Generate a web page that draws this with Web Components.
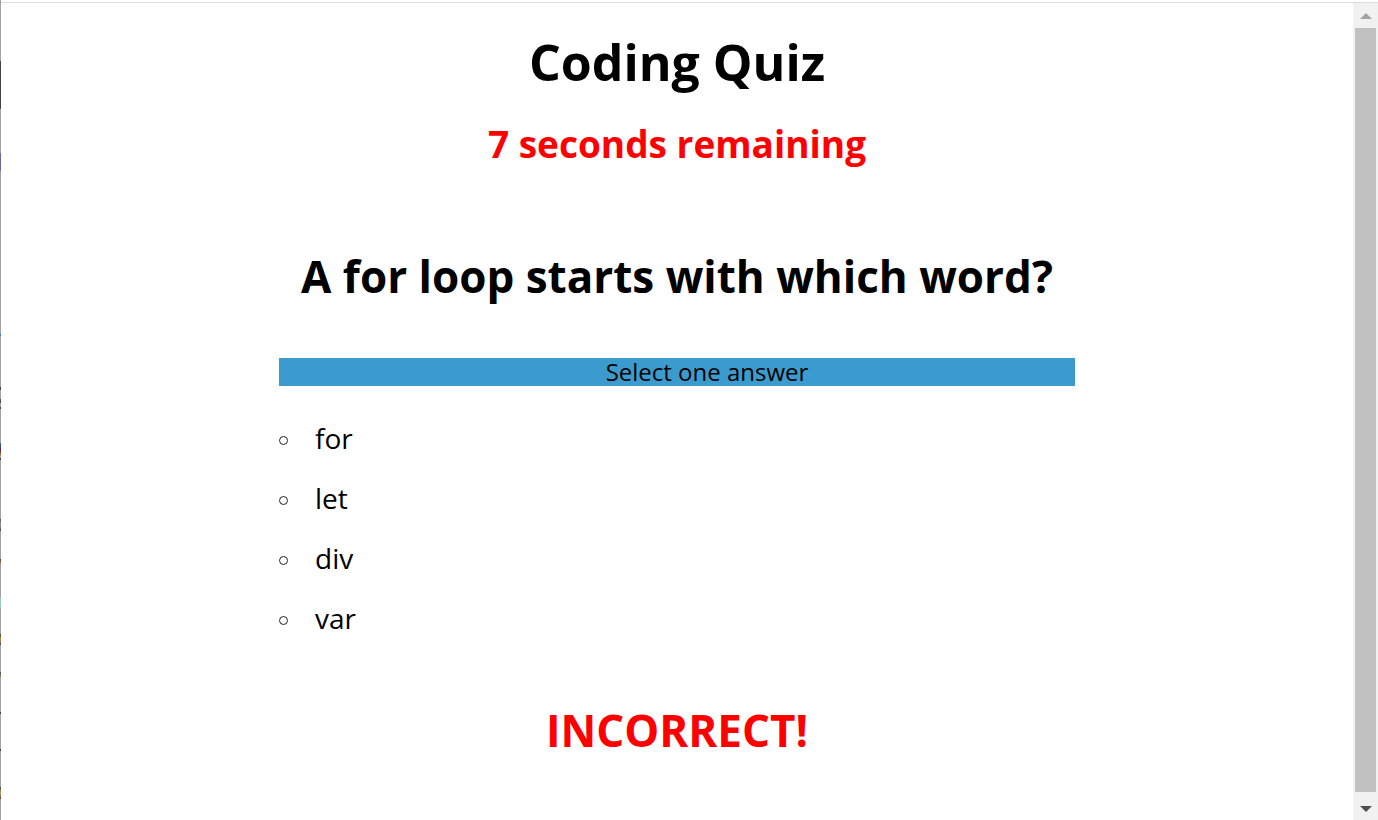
<!DOCTYPE html>
<html lang="en">
<head>
<meta charset="utf-8">
<title>Coding Quiz</title>
<style>
html, body { margin: 0; height: 100%; }
body { background: #fff; color: #000; font-family: "Open Sans", "Noto Sans", sans-serif; }
</style>
</head>
<body>
<quiz-window>
  <quiz-card>
    <span slot="title">Coding Quiz</span>
    <span slot="timer">7 seconds remaining</span>
    <span slot="question">A for loop starts with which word?</span>
    <answer-list slot="answers" prompt="Select one answer" options="for,let,div,var"></answer-list>
    <span slot="result">INCORRECT!</span>
  </quiz-card>
</quiz-window>
<script>
function attach(host, html) {
  const t = document.createElement('template');
  t.innerHTML = html;
  const root = host.attachShadow({ mode: 'open' });
  root.append(t.content.cloneNode(true));
  return root;
}

customElements.define('scroll-rail', class extends HTMLElement {
  constructor() {
    super();
    attach(this, `
      <style>
        :host { display: flex; flex-direction: column; background: #f1f1f1; width: 25px; }
        button { border: 0; padding: 0; height: 25px; background: none; display: grid; place-items: center; color: #a3a3a3; }
        button.down { height: 28px; padding-top: 6px; color: #505050; }
        svg { display: block; }
        .thumb { flex: 1; margin: 0 2px; background: #c1c1c1; }
      </style>
      <button aria-label="Scroll up"><svg width="12" height="6" viewBox="0 0 12 6"><path d="M6 0 12 6H0Z" fill="currentColor"/></svg></button>
      <div class="thumb"></div>
      <button class="down" aria-label="Scroll down"><svg width="12" height="6" viewBox="0 0 12 6"><path d="M0 0H12L6 6Z" fill="currentColor"/></svg></button>`);
  }
});

customElements.define('quiz-window', class extends HTMLElement {
  constructor() {
    super();
    attach(this, `
      <style>
        :host { display: grid; grid-template: 3px 1fr / 1px 1fr auto; min-height: 100%; }
        .edge { grid-row: 1 / -1; background:
          linear-gradient(#45454a, #45454a) 0 61px / 1px 48px no-repeat,
          linear-gradient(#69699a, #69699a) 0 153px / 1px 18px no-repeat,
          linear-gradient(#4484b0, #4484b0) 0 334px / 1px 2px no-repeat,
          linear-gradient(#444, #444) 0 387px / 1px 3px no-repeat,
          linear-gradient(#6c5540, #444) 0 399px / 1px 4px no-repeat,
          linear-gradient(#444, #444) 0 407px / 1px 2px no-repeat,
          linear-gradient(#2f6ba5, #502828, #d0a060) 0 443px / 1px 14px no-repeat,
          linear-gradient(#444, #444) 0 458px / 1px 2px no-repeat,
          linear-gradient(#555, #999, #444) 0 519px / 1px 12px no-repeat,
          linear-gradient(#444, #b08040) 0 559px / 1px 5px no-repeat,
          linear-gradient(#9cb, #9cb) 0 598px / 1px 10px no-repeat,
          linear-gradient(#444, #c09040, #446) 0 634px / 1px 11px no-repeat,
          linear-gradient(#357, #b07830) 0 672px / 1px 5px no-repeat,
          linear-gradient(#444, #444) 0 712px / 1px 2px no-repeat,
          linear-gradient(#444, #444) 0 749px / 1px 2px no-repeat,
          linear-gradient(#444, #c0a060, #444) 0 787px / 1px 12px no-repeat,
          #a2a2a2; }
        .top { grid-column: 2 / -1; border-bottom: 1px solid #dcdcdc; box-sizing: border-box; }
      </style>
      <div class="edge"></div>
      <div class="top"></div>
      <slot></slot>
      <scroll-rail></scroll-rail>`);
  }
});

customElements.define('quiz-card', class extends HTMLElement {
  constructor() {
    super();
    attach(this, `
      <style>
        :host { display: block; padding: 29px 24px 24px; text-align: center; }
        main { max-width: 796px; margin: 0 auto; }
        h1, h2, p { margin: 0; font-weight: 700; }
        h1 { font-size: 50px; line-height: 60px; }
        .timer { margin-top: 28px; font-size: 37px; line-height: 48px; color: #f00; }
        h2 { margin-top: 78px; font-size: 44px; line-height: 60px; }
        .answers { margin-top: 52px; }
        .result { margin-top: 52px; font-size: 44px; line-height: 60px; color: #f00; }
      </style>
      <main>
        <h1><slot name="title"></slot></h1>
        <p class="timer"><slot name="timer"></slot></p>
        <h2><slot name="question"></slot></h2>
        <div class="answers"><slot name="answers"></slot></div>
        <p class="result"><slot name="result"></slot></p>
      </main>`);
  }
});

customElements.define('answer-list', class extends HTMLElement {
  constructor() {
    super();
    const root = attach(this, `
      <style>
        :host { display: block; }
        .prompt { margin: 0; padding-left: 60px; background: #3c9bce; font-size: 24px; line-height: 28px; }
        ul { list-style: none; margin: 22px 0 0; padding: 0; text-align: left; }
        li { display: flex; align-items: center; gap: 27px; font-size: 28px; line-height: 60px; }
        li::before { content: ""; box-sizing: border-box; width: 9px; height: 9px; margin-top: 5px; border: 1px solid #222; border-radius: 50%; }
      </style>
      <p class="prompt"></p>
      <ul></ul>`);
    root.querySelector('.prompt').textContent = this.getAttribute('prompt');
    for (const option of this.getAttribute('options').split(',')) {
      const li = document.createElement('li');
      li.textContent = option;
      root.querySelector('ul').append(li);
    }
  }
});
</script>
</body>
</html>
